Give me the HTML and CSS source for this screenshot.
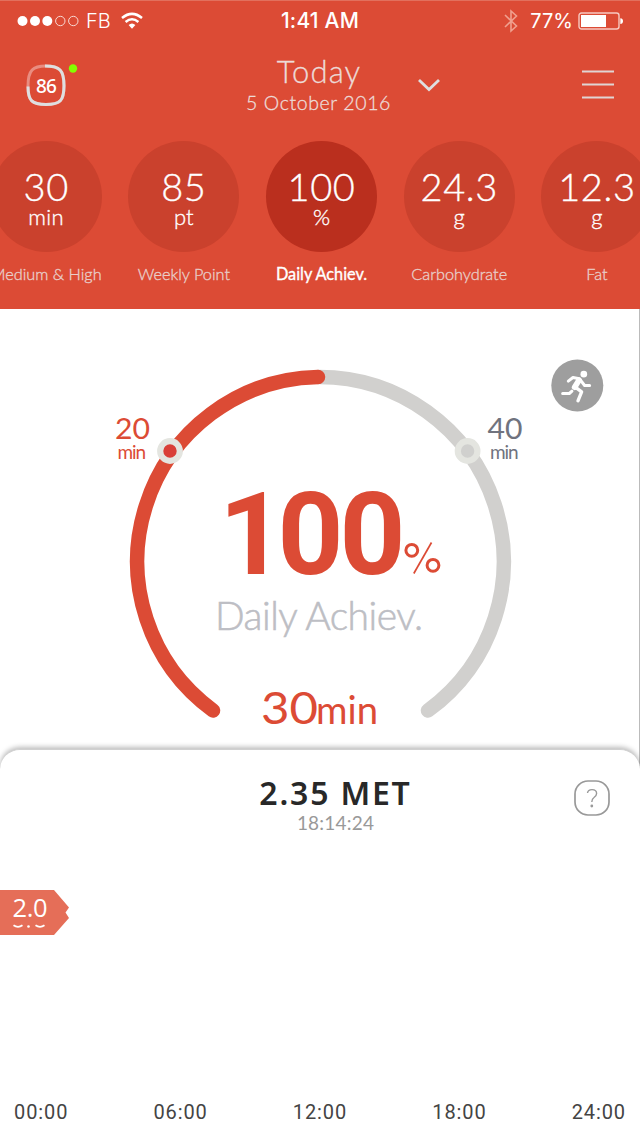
FILE: index.html
```html
<!DOCTYPE html>
<html lang="en">
<head>
<meta charset="utf-8">
<title>Daily Achievement</title>
<link rel="stylesheet" href="styles.css">
</head>
<body>
<main class="app">
  <header class="header">
    <div class="status">
      <div class="status-left">
        <svg class="signal" width="62" height="12" viewBox="0 0 62 12"><g fill="#fff"><circle cx="5.5" cy="6" r="5"/><circle cx="18" cy="6" r="5"/><circle cx="30.3" cy="6" r="5"/></g><g fill="none" stroke="#f8d8d2"><circle cx="43.3" cy="6" r="4.7"/><circle cx="56.3" cy="6" r="4.7"/></g></svg>
        <span class="carrier">FB</span>
        <svg class="wifi" width="22" height="18" viewBox="0 0 22 18"><g fill="none" stroke="#fff" stroke-width="2.5"><path d="M1 6Q11-2.3 21 6"/><path d="M4.6 10Q11 4.6 17.4 10"/></g><path d="M7.6 13Q11 9.8 14.4 13L11 16.7z" fill="#fff"/></svg>
      </div>
      <div class="clock">1:41 AM</div>
      <div class="status-right">
        <svg width="14" height="24" viewBox="0 0 14 24" fill="none" stroke="#f0a08f" stroke-width="1.6"><path d="M1 6L12.5 17L7 22V2L12.5 7L1 18"/></svg>
        <span class="percent">77%</span>
        <svg width="46" height="18" viewBox="0 0 46 18"><rect x="1" y="1" width="40" height="16" rx="2.5" fill="none" stroke="#f7c9c1" stroke-width="1.4"/><path d="M3 3h25v12H3z" fill="#fff"/><path d="M42.3 6.2Q45 6.2 45 9.1T42.3 12z" fill="#fff"/></svg>
      </div>
    </div>
    <div class="nav">
      <div class="battery">
        <svg width="54" height="46" viewBox="0 0 54 46"><path d="M20 4C7 4 2 8 2 24C2 39 6 42.500 20 42.500S38 39 38 24S34 4 20 4Z" fill="none" stroke="#e98d80" stroke-width="3"/><path d="M19 4C34 4 38 8 38 23.500C38 39 34 42.500 20 42.500S2 39 2 24.500" fill="none" stroke="#dedfe0" stroke-width="3"/><circle cx="47" cy="6.500" r="4.200" fill="#84ff00"/></svg>
        <span class="battery-value">86</span>
      </div>
      <div class="date"><div class="today">Today</div><div class="day">5 October 2016</div></div>
      <svg class="chevron" width="24" height="14" viewBox="0 0 24 14"><path d="M2 2L12 11.500L22 2" fill="none" stroke="#dedfe0" stroke-width="2.800"/></svg>
      <svg class="menu" width="32" height="30" viewBox="0 0 32 30"><path d="M0 1.500H32M0 14.500H32M0 27.500H32" stroke="#e0d5d3" stroke-width="1.900"/></svg>
    </div>
    <div class="metrics">
      <div class="metric"><div class="disc"><b class="num">30</b><span class="unit tight">min</span></div><span class="label">Medium &amp; High</span></div>
      <div class="metric"><div class="disc"><b class="num">85</b><span class="unit">pt</span></div><span class="label">Weekly Point</span></div>
      <div class="metric active"><div class="disc"><b class="num">100</b><span class="unit">%</span></div><span class="label">Daily Achiev.</span></div>
      <div class="metric"><div class="disc"><b class="num">24.3</b><span class="unit">g</span></div><span class="label">Carbohydrate</span></div>
      <div class="metric"><div class="disc"><b class="num">12.3</b><span class="unit">g</span></div><span class="label">Fat</span></div>
    </div>
  </header>

  <section class="gauge">
    <svg width="639" height="440" viewBox="0 309 639 440">
      <g fill="none" stroke-width="14.500" stroke-linecap="round">
        <path d="M318 377A184.500 184.500 0 0 1 428 710.500" stroke="#d1d0ce"/>
        <path d="M213 710.500A184.500 184.500 0 0 1 318 377" stroke="#dc4b35"/>
      </g>
      <circle cx="170" cy="451" r="9.800" fill="#d93f38" stroke="#e4e5e0" stroke-width="6.200"/>
      <circle cx="467.600" cy="451" r="9.800" fill="#d0d0ce" stroke="#e4e5e0" stroke-width="6.200"/>
      <g class="lato" fill="#dc4b35">
        <text x="115" y="438.500" font-size="28" textLength="35" lengthAdjust="spacingAndGlyphs">20</text>
        <text x="117.500" y="459" font-size="19" textLength="28.500">min</text>
        <g fill="#70737e">
          <text x="487.500" y="438.500" font-size="28" textLength="35" lengthAdjust="spacingAndGlyphs">40</text>
          <text x="490" y="459" font-size="19" textLength="28.500">min</text>
        </g>
        <text x="261" y="723.500" font-size="45" textLength="57" lengthAdjust="spacingAndGlyphs">30</text>
        <text x="316" y="723.500" font-size="38" textLength="62" lengthAdjust="spacingAndGlyphs">min</text>
      </g>
      <text class="score" x="219 277.500 339.500" y="573.500" font-size="115">100</text>
      <g fill="none" stroke="#dc4b35"><circle cx="411.800" cy="550.300" r="5.900" stroke-width="3"/><circle cx="433" cy="565.300" r="5.900" stroke-width="3"/><path d="M431.500 542.500L413.800 573.500" stroke-width="1.700"/></g>
      <text class="caption" x="215" y="630" font-size="39" textLength="208">Daily Achiev.</text>
      <g transform="translate(551.300 359.500) scale(.3333)">
        <circle cx="78" cy="78" r="78" fill="#9e9e9e"/>
        <circle cx="97.500" cy="44" r="10" fill="#fff"/>
        <g fill="none" stroke="#fff" stroke-linecap="round" stroke-linejoin="round" stroke-width="9"><path d="M51 65L65 54L84 58"/><path d="M87 61L100 78H115"/><path d="M34 102H54L62 95"/><path d="M72 83L91 97L80 124" stroke-width="10"/><path d="M83 62L70 83" stroke-width="17"/></g>
      </g>
    </svg>
  </section>

  <section class="sheet">
    <div class="sheet-head">
      <div class="reading"><div class="met">2.35 MET</div><div class="time">18:14:24</div></div>
      <svg class="help" width="36" height="36" viewBox="0 0 36 36"><rect x="1" y="1" width="34" height="34" rx="13" fill="none" stroke="#999" stroke-width="1.700"/><path d="M13.500 13Q14 9.600 18 9.600Q22.600 9.600 22.600 13.500Q22.600 15.600 20 17.500Q17.800 19 17.800 22" fill="none" stroke="#999" stroke-width="1.400"/><circle cx="17.800" cy="26" r="1.400" fill="#999"/></svg>
    </div>
    <svg class="tag" width="70" height="45" viewBox="0 0 70 45"><path d="M0 0H54L69 17.500L65.500 22.500L69 28L54 45H0Z" fill="#e56e58"/><text x="12.500" y="27" font-size="25.500" textLength="35" fill="#fff">2.0</text><path d="M13.500 35.300Q18 38.600 22.500 35.300M35.500 35.300Q40 38.600 44.500 35.300" fill="none" stroke="#fff" stroke-width="1.700"/><circle cx="28.500" cy="36.500" r="1.300" fill="#fff"/></svg>
    <div class="axis"><span>00:00</span><span>06:00</span><span>12:00</span><span>18:00</span><span>24:00</span></div>
  </section>
</main>
</body>
</html>
```
FILE: styles.css
```css
* { box-sizing: border-box; }
body { margin: 0; background: #fff; }
svg { display: block; flex: none; }
.app { width: 640px; height: 1136px; overflow: hidden; display: flex; flex-direction: column; font-family: Lato, sans-serif; }

.header { height: 309px; flex: none; overflow: hidden; background: #dc4b35; border-top: 1px solid #e2705d; color: #fff; display: flex; flex-direction: column; }
.status { height: 40px; padding: 0 16px 0 17px; display: grid; grid-template-columns: 1fr auto 1fr; align-items: center; }
.status-left, .status-right { display: flex; align-items: center; }
.status-left { font-family: Inter, sans-serif; font-size: 20px; font-weight: 300; }
.carrier { margin: 0 10px 0 7px; }
.clock { margin-left: -1px; font: 500 21px/40px Inter, sans-serif; letter-spacing: .2px; }
.status-right { justify-content: flex-end; }
.percent { margin: 0 5px 0 12px; font: 400 20px/40px Inter, sans-serif; }

.nav { height: 100px; display: grid; grid-template-columns: 220px 196px 24px 1fr; padding: 0 26px 0 26px; align-items: start; }
.battery { display: grid; margin-top: 21px; width: 54px; }
.battery > * { grid-area: 1 / 1; }
.battery-value { width: 40px; text-align: center; font: 500 19px/48px "Noto Sans", sans-serif; letter-spacing: -.8px; }
.date { color: #eddbd8; font-weight: 300; width: 146px; -webkit-text-stroke: .3px #eddbd8; }
.today { margin-top: 14px; font-size: 31px; line-height: 32px; letter-spacing: 1.2px; text-align: center; }
.day { margin-top: 1px; font-size: 19.500px; line-height: 30px; letter-spacing: .6px; white-space: nowrap; }
.chevron { margin: 37px 0 0 -25px; }
.menu { margin: 29px 0 0 auto; }

.metrics { display: grid; grid-template-columns: repeat(5, 137.700px); margin-left: -22.700px; }
.metric { display: flex; flex-direction: column; align-items: center; color: #e9cdc8; }
.disc { width: 111px; height: 111px; border-radius: 50%; background: #ca412d; color: #fff; display: flex; flex-direction: column; align-items: center; font-weight: 300; -webkit-text-stroke: .35px #fff; }
.active .disc { background: #ba2f1e; }
.num { font-size: 38px; font-weight: 300; line-height: 38px; margin-top: 26px; letter-spacing: .6px; }
.unit { font-size: 22px; line-height: 24px; }
.tight { letter-spacing: .3px; }
.label { margin-top: 12px; font-size: 16.300px; line-height: 20px; white-space: nowrap; font-weight: 300; -webkit-text-stroke: .35px #e9cdc8; }
.active .label { color: #fff; font-weight: 400; -webkit-text-stroke-color: #fff; }

.gauge { height: 457px; flex: none; border-right: 1px solid #bbb; }
.gauge .lato, .caption { font-family: Lato, sans-serif; }
.score { font-family: Roboto, sans-serif; font-weight: 700; fill: #dc4b35; }
.caption { font-weight: 300; fill: #bdbec4; stroke: #bdbec4; stroke-width: .6px; }

.sheet { position: relative; height: 387px; margin-top: -17px; flex: none; border-radius: 20px 20px 0 0; background: #fff; box-shadow: 0 -2px 5px #0004; border-top: 1px solid #d0d0d0; display: flex; flex-direction: column; }
.sheet-head { height: 140px; display: grid; grid-template-columns: 1fr 270px 1fr; padding: 0 30px; }
.reading { grid-column: 2; text-align: center; padding: 26px 0 0 31px; }
.met { font: 600 32px/33px "Noto Sans", sans-serif; letter-spacing: 1.800px; color: #282828; white-space: nowrap; }
.time { font-size: 19px; line-height: 28px; color: #999; letter-spacing: .2px; }
.help { justify-self: end; margin-top: 30px; }
.tag { font-family: "Open Sans", sans-serif; }
.axis { margin-top: auto; padding: 0 14px 13px; display: flex; justify-content: space-between; font: 20px/22px Roboto, sans-serif; letter-spacing: .9px; color: #444; }
```
